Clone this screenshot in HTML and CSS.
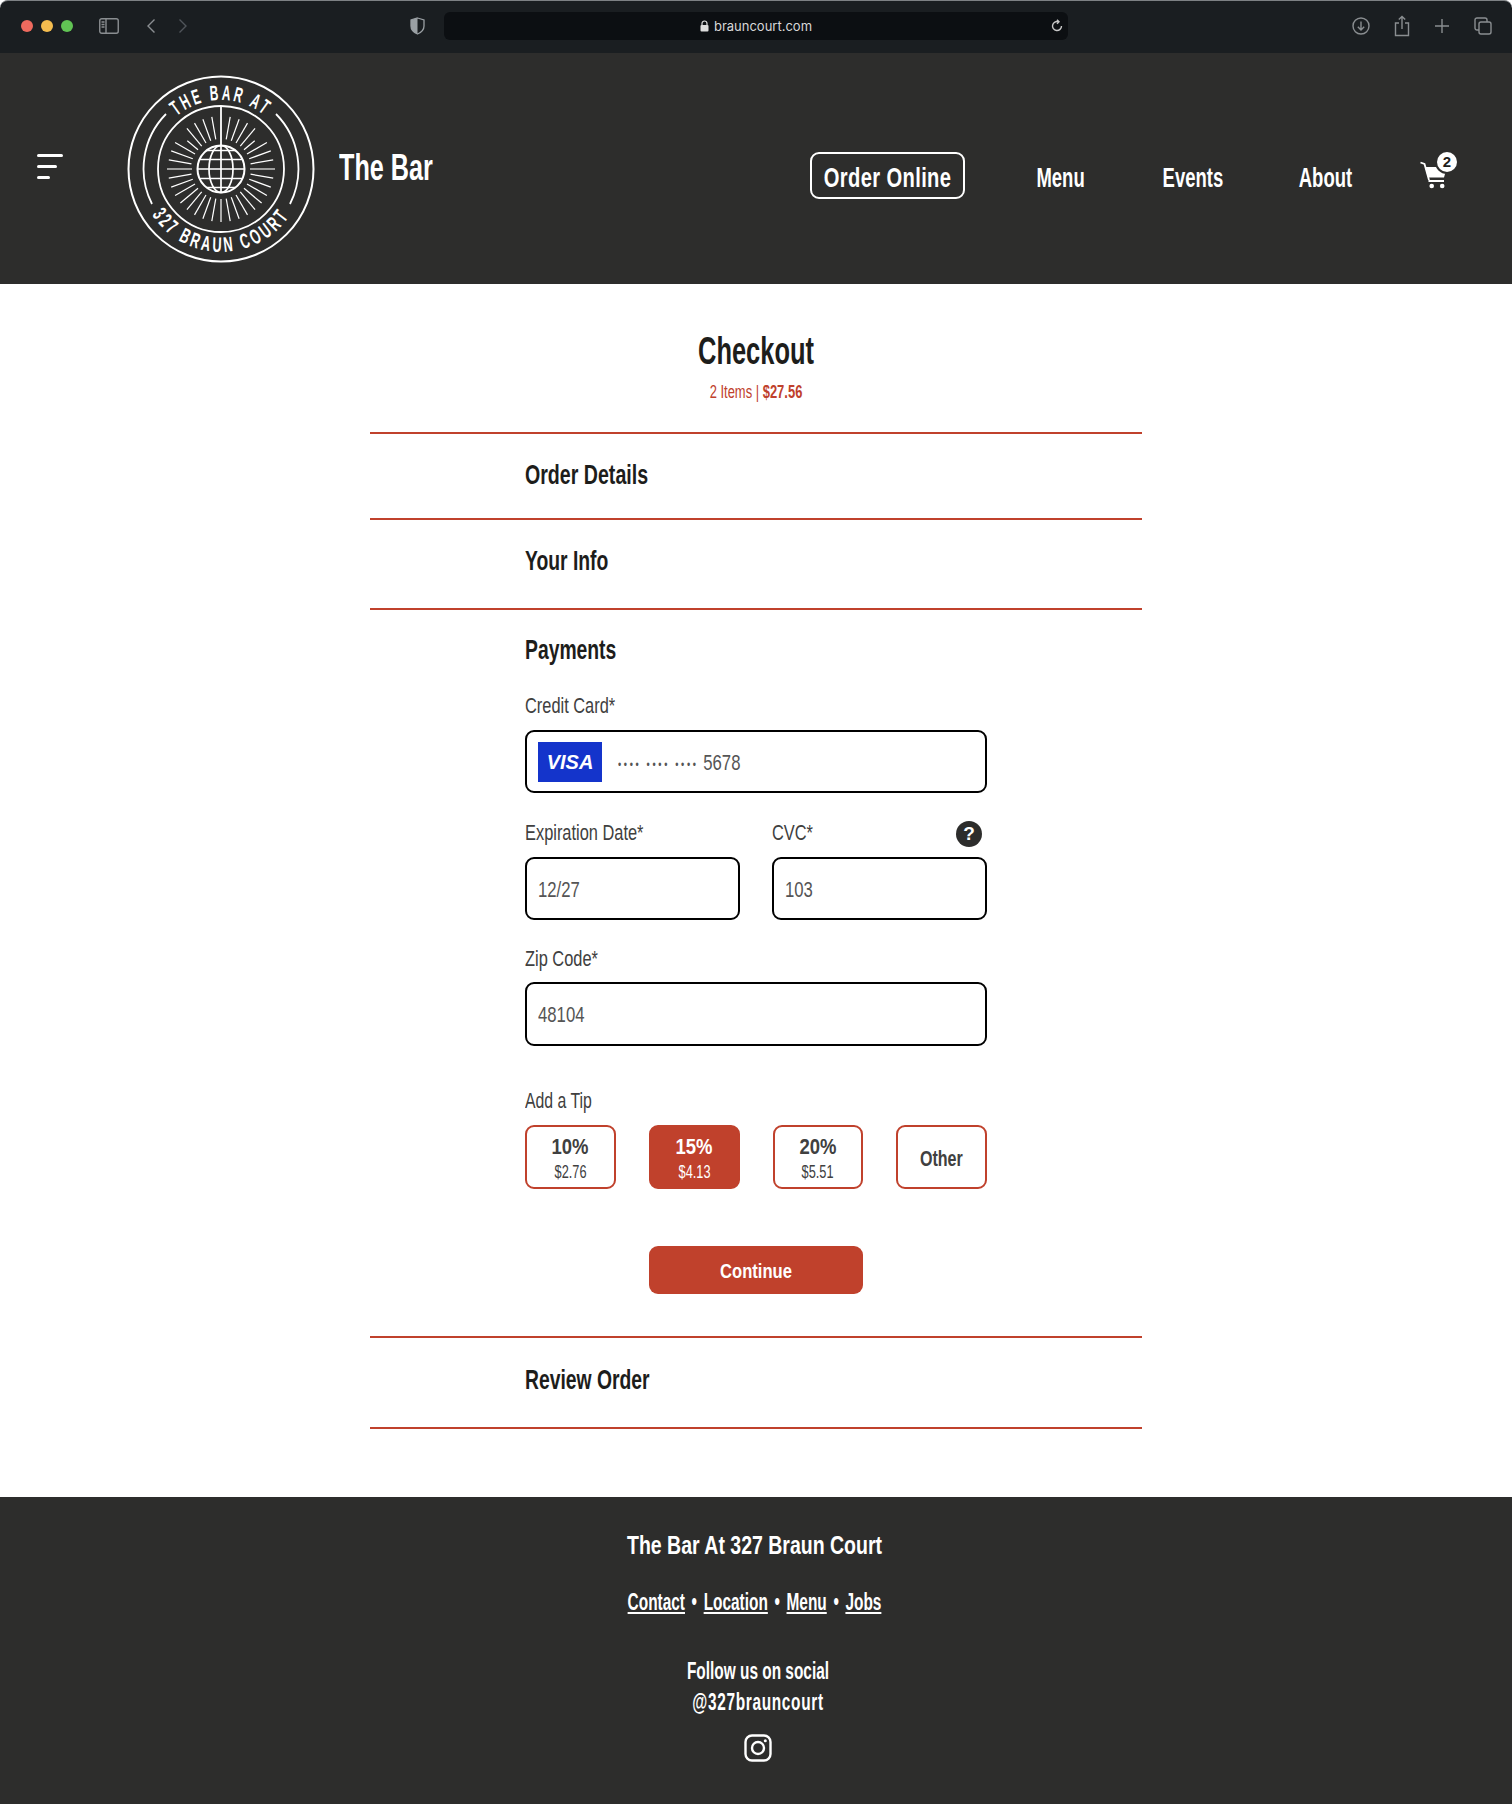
FILE: index.html
```html
<!DOCTYPE html>
<html lang="en">
<head>
    <meta charset="UTF-8">
    <meta name="viewport" content="width=device-width, initial-scale=1.0">
    <title>The Bar - Checkout</title>
    <link rel="stylesheet" href="styles.css">
</head>
<body>
    <!-- browser chrome -->
    <div class="browser-bar">
        <div class="lights">
            <span class="light red"></span>
            <span class="light yellow"></span>
            <span class="light green"></span>
        </div>
        <svg class="chrome-icon sidebar-icon" width="20" height="16" viewBox="0 0 20 16"><rect x="0.75" y="0.75" width="18.5" height="14.5" rx="2"/><path d="M7 1v14M2.5 4h3M2.5 6.5h3M2.5 9h3"/></svg>
        <svg class="chrome-icon back-icon" width="10" height="16" viewBox="0 0 10 16"><path d="M8.5 1.5 2 8l6.500 6.500"/></svg>
        <svg class="chrome-icon fwd-icon" width="10" height="16" viewBox="0 0 10 16"><path d="M1.500 1.500 8 8l-6.500 6.500"/></svg>
        <svg class="shield-icon" width="15" height="18" viewBox="0 0 15 18"><path d="M7.500 1 14 3v6c0 4-3 6.500-6.500 8C4 15.500 1 13 1 9V3z" fill="none" stroke="#9aa0a4" stroke-width="1.300"/><path d="M7.500 1 1 3v6c0 4 3 6.500 6.500 8z" fill="#9aa0a4"/></svg>
        <div class="address-bar">
            <svg class="lock" width="9" height="12" viewBox="0 0 9 12"><path d="M2 5V3.500a2.500 2.500 0 0 1 5 0V5" fill="none" stroke="#ddd" stroke-width="1.200"/><rect x="0.500" y="5" width="8" height="6.500" rx="1" fill="#ddd"/></svg>
            <span class="url">brauncourt.com</span>
            <svg class="chrome-icon reload" width="12" height="14" viewBox="0 0 12 14"><path d="M7.500 2.800A4.500 4.500 0 1 0 10.500 7M6 .8l2 2-2 2"/></svg>
        </div>
        <div class="chrome-right">
            <svg class="chrome-icon" width="18" height="18" viewBox="0 0 18 18"><circle cx="9" cy="9" r="8"/><path d="M9 4.500v8.500M5.800 9.800 9 13l3.200-3.200"/></svg>
            <svg class="chrome-icon" width="16" height="22" viewBox="0 0 16 22"><path d="M5 8H1.500v12.500h13V8H11M8 14V1.500M4.800 4.500 8 1.500l3.200 3"/></svg>
            <svg class="chrome-icon" width="16" height="16" viewBox="0 0 16 16"><path d="M8 1v14M1 8h14"/></svg>
            <svg class="chrome-icon" width="18" height="18" viewBox="0 0 18 18"><rect x="5" y="5" width="12" height="12" rx="2"/><path d="M5 13H3a2 2 0 0 1-2-2V3a2 2 0 0 1 2-2h8a2 2 0 0 1 2 2v2"/></svg>
        </div>
    </div>

    <header class="site-header">
        <div class="hamburger"><span></span><span></span><span></span></div>
        <svg class="logo" width="188" height="188" viewBox="-94 -94 188 188">
            <defs>
                <path id="topArc" d="M-44.350 -52.860A69 69 0 0 1 44.350 -52.860"/>
                <path id="botArc" d="M-69.200 45.800A83 83 0 0 0 69.200 45.800"/>
            </defs>
            <g fill="none" stroke="#fff">
                <circle r="92.500" stroke-width="2"/>
                <circle r="63" stroke-width="1.800"/>
                <path d="M-55 -55A78 78 0 0 0 -69 35M55 -55A78 78 0 0 1 69 35" stroke-width="1.800"/>
                <path d="M0 -63V-24" stroke-width="1.800"/>
                <circle r="23.500" stroke-width="2"/>
                <ellipse rx="12" ry="23.500" stroke-width="1.700"/>
                <path d="M0 -23.500V23.500M-23.500 0H23.500M-21.500 -9.500H21.500M-21.500 9.500H21.500M-14 -18.500H14M-14 18.500H14" stroke-width="1.700"/>
                <g class="rays" stroke-width="1.200">
                    <line y1="-30" y2="-53" transform="rotate(10)"/>
                    <line y1="-30" y2="-53" transform="rotate(20)"/>
                    <line y1="-30" y2="-53" transform="rotate(30)"/>
                    <line y1="-30" y2="-53" transform="rotate(40)"/>
                    <line y1="-30" y2="-44" transform="rotate(50)"/>
                    <line y1="-30" y2="-53" transform="rotate(60)"/>
                    <line y1="-30" y2="-53" transform="rotate(70)"/>
                    <line y1="-30" y2="-53" transform="rotate(80)"/>
                    <line y1="-29" y2="-54" stroke="#bbb" stroke-width="1.600" transform="rotate(90)"/>
                    <line y1="-30" y2="-53" transform="rotate(100)"/>
                    <line y1="-30" y2="-53" transform="rotate(110)"/>
                    <line y1="-30" y2="-53" transform="rotate(120)"/>
                    <line y1="-30" y2="-53" transform="rotate(130)"/>
                    <line y1="-30" y2="-53" transform="rotate(140)"/>
                    <line y1="-30" y2="-53" transform="rotate(150)"/>
                    <line y1="-30" y2="-53" transform="rotate(160)"/>
                    <line y1="-30" y2="-53" transform="rotate(170)"/>
                    <line y1="-30" y2="-53" transform="rotate(180)"/>
                    <line y1="-30" y2="-53" transform="rotate(190)"/>
                    <line y1="-30" y2="-53" transform="rotate(200)"/>
                    <line y1="-30" y2="-53" transform="rotate(210)"/>
                    <line y1="-30" y2="-53" transform="rotate(220)"/>
                    <line y1="-30" y2="-53" transform="rotate(230)"/>
                    <line y1="-30" y2="-53" transform="rotate(240)"/>
                    <line y1="-30" y2="-53" transform="rotate(250)"/>
                    <line y1="-30" y2="-53" transform="rotate(260)"/>
                    <line y1="-29" y2="-54" stroke="#bbb" stroke-width="1.600" transform="rotate(270)"/>
                    <line y1="-30" y2="-53" transform="rotate(280)"/>
                    <line y1="-30" y2="-53" transform="rotate(290)"/>
                    <line y1="-30" y2="-53" transform="rotate(300)"/>
                    <line y1="-30" y2="-44" transform="rotate(310)"/>
                    <line y1="-30" y2="-53" transform="rotate(320)"/>
                    <line y1="-30" y2="-53" transform="rotate(330)"/>
                    <line y1="-30" y2="-53" transform="rotate(340)"/>
                    <line y1="-30" y2="-53" transform="rotate(350)"/>
                </g>
            </g>
            <text class="logo-text top-text"><textPath href="#topArc" textLength="96.300" lengthAdjust="spacingAndGlyphs">THE BAR AT</textPath></text>
            <text class="logo-text bot-text"><textPath href="#botArc" textLength="163.700" lengthAdjust="spacingAndGlyphs">327 BRAUN COURT</textPath></text>
        </svg>
        <div class="brand">The Bar</div>
        <nav class="main-nav">
            <a href="#" class="order-btn"><span>Order Online</span></a>
            <a href="#" class="nav-link"><span>Menu</span></a>
            <a href="#" class="nav-link"><span>Events</span></a>
            <a href="#" class="nav-link"><span>About</span></a>
            <div class="cart">
                <svg width="30" height="30" viewBox="0 0 30 30"><path d="M0.500 1.500 4.500 3 9 19" fill="none" stroke="#fff" stroke-width="1.800"/><path d="M5 6H27L24 16.500H8z" fill="#fff"/><path d="M8.500 20H24" stroke="#fff" stroke-width="2"/><circle cx="11.700" cy="25" r="2.300" fill="#fff"/><circle cx="22.200" cy="25" r="2.300" fill="#fff"/></svg>
                <span class="badge">2</span>
            </div>
        </nav>
    </header>

    <main class="checkout">
        <div class="checkout-head">
            <h1>Checkout</h1>
            <p class="summary">2 Items | <b>$27.56</b></p>
        </div>

        <section class="step step-details"><h2>Order Details</h2></section>
        <section class="step step-info"><h2>Your Info</h2></section>

        <section class="step step-payments">
            <h2>Payments</h2>
            <div class="form-group">
                <label>Credit Card*</label>
                <div class="input-box card-box">
                    <span class="visa">VISA</span>
                    <span class="input-text"><span class="dots">•••• •••• ••••</span> 5678</span>
                </div>
            </div>
            <div class="form-row">
                <div class="form-group">
                    <label>Expiration Date*</label>
                    <div class="input-box"><span class="input-text">12/27</span></div>
                </div>
                <div class="form-group">
                    <label>CVC*</label>
                    <span class="help">?</span>
                    <div class="input-box"><span class="input-text">103</span></div>
                </div>
            </div>
            <div class="form-group">
                <label>Zip Code*</label>
                <div class="input-box zip-box"><span class="input-text">48104</span></div>
            </div>

            <div class="tip-label">Add a Tip</div>
            <div class="tips">
                <button class="tip"><b>10%</b><span>$2.76</span></button>
                <button class="tip active"><b>15%</b><span>$4.13</span></button>
                <button class="tip"><b>20%</b><span>$5.51</span></button>
                <button class="tip"><b class="tip-other">Other</b></button>
            </div>
            <button class="btn-continue"><span>Continue</span></button>
        </section>

        <section class="step step-review"><h2>Review Order</h2></section>
    </main>

    <footer class="site-footer">
        <h3>The Bar At 327 Braun Court</h3>
        <p class="footer-links"><a href="#">Contact</a> • <a href="#">Location</a> • <a href="#">Menu</a> • <a href="#">Jobs</a></p>
        <p class="social">Follow us on social<br><span class="handle">@327brauncourt</span></p>
        <svg class="insta" width="28" height="28" viewBox="0 0 28 28" fill="none" stroke="#fff" stroke-width="2.400"><rect x="1.500" y="1.500" width="25" height="25" rx="6.500"/><circle cx="14" cy="14" r="6"/><circle cx="21.300" cy="6.700" r="1.500" fill="#fff" stroke="none"/></svg>
    </footer>
</body>
</html>
```

FILE: styles.css
```css
* {
    box-sizing: border-box;
}

/* no condensed family is installed, so text is narrowed with scaleX */
body {
    margin: 0;
    background-color: #fff;
    color: #1d1d1b;
    font-family: "Liberation Sans", sans-serif;
}

/* browser chrome */
.browser-bar {
    height: 53px;
    padding-bottom: 2px;
    background-color: #1a1e21;
    border-top: 1px solid #7d8184;
    border-radius: 8px 8px 0 0;
    display: flex;
    align-items: center;
}

.lights {
    display: flex;
    gap: 8px;
    margin-left: 21px;
}

.light {
    width: 12px;
    height: 12px;
    border-radius: 50%;
}

.red { background-color: #ee6a5e; }
.yellow { background-color: #f5bd4f; }
.green { background-color: #61c454; }

.chrome-icon {
    fill: none;
    stroke: #8a8e91;
    stroke-width: 1.4;
}

.sidebar-icon { margin-left: 26px; }
.back-icon { margin-left: 27px; }
.fwd-icon { margin-left: 22px; stroke: #50555a; }
.shield-icon { margin-left: 222px; }

.address-bar {
    width: 624px;
    height: 28px;
    margin-left: 19px;
    background-color: #0c0f12;
    border-radius: 6px;
    display: flex;
    align-items: center;
    justify-content: center;
    gap: 5px;
    position: relative;
}

.url {
    font-family: Inter, sans-serif;
    font-size: 13px;
    color: #d8d8d8;
}

.reload {
    position: absolute;
    right: 5px;
    top: 7px;
    stroke: #c8c8c8;
}

.chrome-right {
    margin-left: auto;
    margin-right: 20px;
    display: flex;
    align-items: center;
    gap: 24px;
}

/* site header */
.site-header {
    height: 231px;
    background-color: #2d2d2c;
    display: flex;
    align-items: center;
    color: #fff;
}

.hamburger {
    width: 26px;
    margin-left: 37px;
    margin-bottom: 4px;
    display: flex;
    flex-direction: column;
    gap: 7.500px;
}

.hamburger span {
    display: block;
    height: 3.500px;
    background-color: #fff;
    border-radius: 2px;
}

.hamburger span:nth-child(2) { width: 20px; }
.hamburger span:nth-child(3) { width: 13px; }

.logo {
    margin-left: 64px;
    flex-shrink: 0;
}

.logo-text {
    fill: #fff;
    font-size: 21px;
    font-weight: bold;
}

.top-text { letter-spacing: 4.600px; }
.bot-text { letter-spacing: 5px; }

.brand {
    margin-left: 24px;
    margin-bottom: 2px;
    font-size: 36px;
    font-weight: bold;
    transform: scaleX(.7);
    transform-origin: left;
}

.main-nav {
    margin-left: auto;
    margin-top: 14px;
    margin-right: 62px;
    display: flex;
    align-items: center;
}

.main-nav a {
    color: #fff;
    text-decoration: none;
    font-size: 28px;
    font-weight: bold;
    white-space: nowrap;
    display: flex;
    align-items: center;
    justify-content: center;
}

.main-nav a span {
    display: block;
}

.nav-link {
    width: 132px;
    margin-top: 4px;
}

.nav-link span {
    transform: scaleX(.66);
}

.main-nav .order-btn {
    width: 155px;
    height: 47px;
    border: 2px solid #fff;
    border-radius: 9px;
    margin-right: 30px;
    padding-top: 5px;
}

.order-btn span {
    letter-spacing: .5px;
    transform: scaleX(.72);
}

.cart {
    position: relative;
    width: 30px;
    height: 30px;
    margin-left: 29px;
}

.badge {
    position: absolute;
    top: -9px;
    left: 17px;
    width: 20px;
    height: 20px;
    border-radius: 50%;
    background-color: #fff;
    box-shadow: 0 0 0 2px #2d2d2c;
    color: #1d1d1b;
    font-size: 15px;
    font-weight: bold;
    text-align: center;
    line-height: 20px;
}

/* checkout */
.checkout {
    width: 772px;
    margin: 0 auto;
    height: 1213px;
}

.checkout-head {
    height: 148px;
    padding-top: 45px;
    text-align: center;
}

.checkout-head h1 {
    margin: 0;
    font-size: 38px;
    line-height: 44px;
    transform: scaleX(.67);
}

.summary {
    margin: 9px 0 0;
    color: #c0412c;
    font-size: 18px;
    transform: scaleX(.72);
}

.step {
    border-top: 2px solid #c0412c;
    padding: 0 155px;
}

.step h2 {
    margin: 0;
    font-size: 28px;
    line-height: 32px;
    transform: scaleX(.69);
    transform-origin: left;
}

.step-details { height: 86px; padding-top: 25px; }
.step-details h2 { transform: scaleX(.7); }
.step-info { height: 90px; padding-top: 25px; }
.step-payments { height: 728px; padding-top: 24px; }
.step-review { height: 93px; padding-top: 26px; border-bottom: 2px solid #c0412c; }

.form-group {
    position: relative;
}

.step-payments h2 { margin-bottom: 27px; }

label {
    display: block;
    height: 24px;
    font-size: 22px;
    line-height: 25px;
    color: #404040;
    margin-bottom: 13px;
    transform: scaleX(.745);
    transform-origin: left;
}

.input-box {
    height: 63px;
    border: 2px solid #000;
    border-radius: 9px;
    padding: 2px 11px 0;
    display: flex;
    align-items: center;
    font-size: 22px;
    color: #555;
    margin-bottom: 27px;
}

.input-text {
    display: block;
    white-space: nowrap;
    transform: scaleX(.76);
    transform-origin: left;
}

.form-row .input-box {
    margin-bottom: 26px;
}

.zip-box {
    height: 64px;
}

.form-group:has(.zip-box) label {
    margin-bottom: 12px;
}

.visa {
    width: 64px;
    height: 40px;
    margin-top: -2px;
    background-color: #1434cb;
    color: #fff;
    font-style: italic;
    font-weight: bold;
    font-size: 20px;
    text-align: center;
    line-height: 41px;
    margin-right: 16px;
}

.dots {
    font-size: 12px;
    letter-spacing: 3.500px;
    vertical-align: 1px;
}

.form-row {
    display: grid;
    grid-template-columns: 215px 1fr;
    gap: 32px;
}

.help {
    position: absolute;
    right: 5px;
    top: 1px;
    width: 26px;
    height: 26px;
    border-radius: 50%;
    background-color: #2d2d2c;
    color: #fff;
    font-weight: bold;
    font-size: 19px;
    line-height: 26px;
    text-align: center;
}

.tip-label {
    margin-top: 43px;
    font-size: 22px;
    line-height: 24px;
    color: #404040;
    transform: scaleX(.72);
    transform-origin: left;
}

.tips {
    display: grid;
    grid-template-columns: repeat(4, 1fr);
    gap: 33px;
    margin-top: 12px;
}

.tip {
    height: 64px;
    border: 2px solid #c0412c;
    border-radius: 9px;
    background-color: #fff;
    color: #404040;
    font-family: inherit;
    padding: 3px 0 0;
    display: flex;
    flex-direction: column;
    align-items: center;
    justify-content: center;
}

.tip b {
    font-size: 22px;
    line-height: 27px;
    transform: scaleX(.84);
}

.tip .tip-other {
    transform: scaleX(.73);
}

.tip span {
    font-size: 18px;
    line-height: 24px;
    transform: scaleX(.71);
}

.tip.active {
    background-color: #c0412c;
    color: #fff;
}

.btn-continue {
    display: block;
    width: 214px;
    height: 48px;
    margin: 57px auto 0;
    padding: 2px 0 0;
    border: none;
    border-radius: 9px;
    background-color: #c0412c;
    color: #fff;
    font-family: inherit;
    font-size: 21px;
    font-weight: bold;
}

.btn-continue span {
    display: block;
    transform: scaleX(.79);
}

/* footer */
.site-footer {
    height: 307px;
    background-color: #2d2d2c;
    color: #fff;
    text-align: center;
    padding-top: 30px;
}

.site-footer h3 {
    margin: 0 3px 0 0;
    font-size: 25px;
    line-height: 36px;
    transform: scaleX(.78);
}

.footer-links {
    margin: 24px 3px 0 0;
    font-size: 23px;
    font-weight: bold;
    line-height: 30px;
    word-spacing: 3.500px;
    transform: scaleX(.67);
}

.footer-links a {
    color: #fff;
}

.social {
    margin: 39px 0 0 4px;
    font-size: 23px;
    font-weight: bold;
    line-height: 31px;
    transform: scaleX(.67);
}

.handle {
    letter-spacing: 1px;
}

.insta {
    display: block;
    margin: 16px auto 0;
    position: relative;
    left: 2px;
}
```
